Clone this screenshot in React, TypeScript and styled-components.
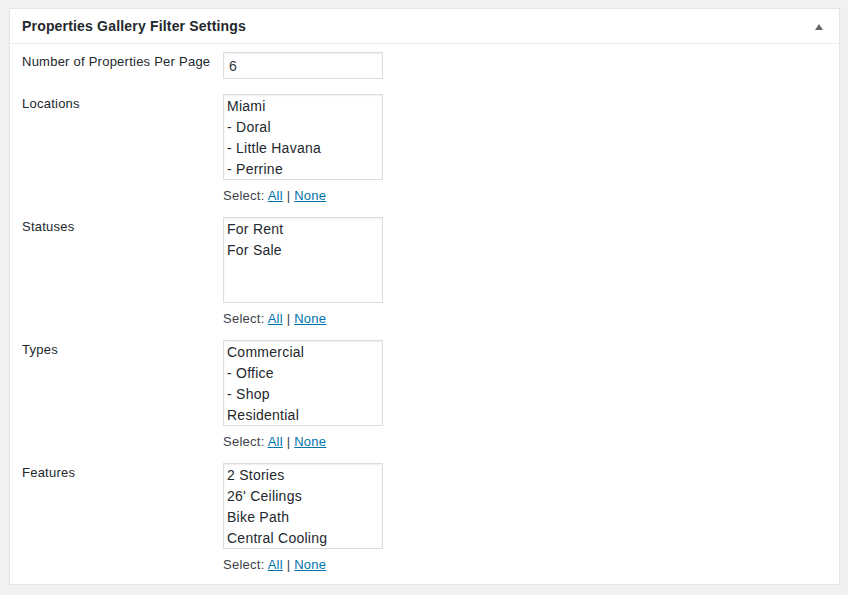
import React from "react";
import styled, { createGlobalStyle } from "styled-components";

const Global = createGlobalStyle`
  html, body { margin: 0; padding: 0; }
  body {
    background: #f1f1f1;
    font-family: "Liberation Sans", Arial, sans-serif;
    color: #23282d;
    font-size: 13px;
  }
`;

const Panel = styled.section`
  margin: 8px 8px 0 9px;
  background: #fff;
  border: 1px solid #e5e5e5;
  box-shadow: 0 1px 1px rgba(0, 0, 0, 0.04);
`;

const Header = styled.header`
  display: flex;
  align-items: center;
  justify-content: space-between;
  box-sizing: border-box;
  height: 35px;
  padding: 2px 15px 0 12px;
  border-bottom: 1px solid #eee;
`;

const Title = styled.h2`
  margin: 0;
  font-size: 14px;
  font-weight: 700;
  line-height: 1.4;
  letter-spacing: 0.18px;
  color: #23282d;
`;

const Toggle = styled.button`
  display: flex;
  align-items: center;
  justify-content: center;
  width: 10px;
  height: 10px;
  padding: 0;
  border: 0;
  background: none;
  cursor: pointer;
`;

const Body = styled.div`
  display: flex;
  flex-direction: column;
  gap: 12px;
  padding: 8px 12px 10px;
`;

const Row = styled.div<{ $extra?: number }>`
  display: grid;
  grid-template-columns: 201px 160px;
  align-items: start;
  margin-bottom: ${(p) => p.$extra ?? 0}px;
`;

const Label = styled.label`
  padding-top: 1px;
  font-size: 13px;
  line-height: 18px;
  letter-spacing: 0.24px;
  color: #23282d;
`;

const Field = styled.div`
  display: flex;
  flex-direction: column;
`;

const TextInput = styled.input`
  box-sizing: border-box;
  width: 160px;
  height: 27px;
  margin: 0;
  padding: 1px 5px 0;
  border: 1px solid #ddd;
  box-shadow: inset 0 1px 2px rgba(0, 0, 0, 0.07);
  font-family: inherit;
  font-size: 14px;
  color: #32373c;
  outline: none;
`;

const ListBox = styled.div`
  box-sizing: border-box;
  width: 160px;
  height: 86px;
  padding: 1px 0;
  border: 1px solid #ddd;
  box-shadow: inset 0 1px 2px rgba(0, 0, 0, 0.07);
  overflow: hidden;
`;

const Option = styled.div`
  padding: 0 3px;
  font-size: 14px;
  line-height: 21px;
  letter-spacing: 0.25px;
  color: #23282d;
  white-space: nowrap;
`;

const SelectLine = styled.div`
  margin-top: 6px;
  font-size: 13px;
  line-height: 19px;
  letter-spacing: 0.25px;
  color: #3c434a;
`;

const Link = styled.a`
  color: #0073aa;
  text-decoration: underline;
  cursor: pointer;
`;

const groups = [
  { label: "Locations", items: ["Miami", "- Doral", "- Little Havana", "- Perrine"] },
  { label: "Statuses", items: ["For Rent", "For Sale"] },
  { label: "Types", items: ["Commercial", "- Office", "- Shop", "Residential"] },
  { label: "Features", items: ["2 Stories", "26' Ceilings", "Bike Path", "Central Cooling"] },
];

export default function App() {
  return (
    <>
      <Global />
      <Panel>
        <Header>
          <Title>Properties Gallery Filter Settings</Title>
          <Toggle aria-label="Toggle panel">
            <svg width="8" height="6" viewBox="0 0 8 6">
              <polygon points="4,0 8,6 0,6" fill="#666" />
            </svg>
          </Toggle>
        </Header>
        <Body>
          <Row $extra={3}>
            <Label>Number of Properties Per Page</Label>
            <Field>
              <TextInput defaultValue="6" />
            </Field>
          </Row>
          {groups.map((g) => (
            <Row key={g.label}>
              <Label>{g.label}</Label>
              <Field>
                <ListBox role="listbox" aria-multiselectable="true">
                  {g.items.map((it) => (
                    <Option role="option" key={it}>
                      {it}
                    </Option>
                  ))}
                </ListBox>
                <SelectLine>
                  Select: <Link>All</Link> | <Link>None</Link>
                </SelectLine>
              </Field>
            </Row>
          ))}
        </Body>
      </Panel>
    </>
  );
}
